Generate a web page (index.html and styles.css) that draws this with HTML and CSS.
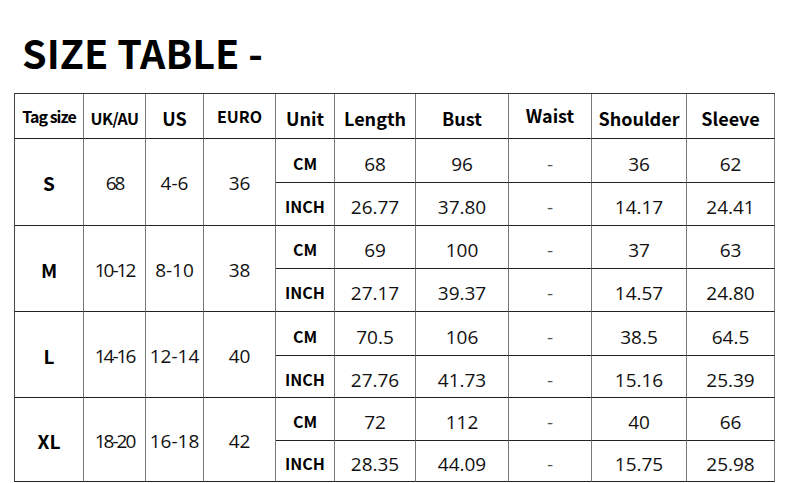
FILE: index.html
```html
<!DOCTYPE html>
<html>
<head>
<meta charset="utf-8">
<link rel="stylesheet" href="styles.css">
</head>
<body>
<h1 class="title">SIZE TABLE -</h1>
<div class="grid">
  <div class="c h tag">Tag size</div>
  <div class="c h ukh">UK/AU</div>
  <div class="c h">US</div>
  <div class="c h euro">EURO</div>
  <div class="c h">Unit</div>
  <div class="c h">Length</div>
  <div class="c h">Bust</div>
  <div class="c h waist">Waist</div>
  <div class="c h">Shoulder</div>
  <div class="c h">Sleeve</div>

  <div class="c sz span2">S</div>
  <div class="c n uk span2">68</div>
  <div class="c n span2">4-6</div>
  <div class="c n span2">36</div>
  <div class="c u">CM</div>
  <div class="c n">68</div>
  <div class="c n">96</div>
  <div class="c n dash">-</div>
  <div class="c n">36</div>
  <div class="c n">62</div>
  <div class="c u">INCH</div>
  <div class="c n">26.77</div>
  <div class="c n">37.80</div>
  <div class="c n dash">-</div>
  <div class="c n">14.17</div>
  <div class="c n">24.41</div>

  <div class="c sz span2">M</div>
  <div class="c n uk span2">10-12</div>
  <div class="c n span2">8-10</div>
  <div class="c n span2">38</div>
  <div class="c u">CM</div>
  <div class="c n">69</div>
  <div class="c n">100</div>
  <div class="c n dash">-</div>
  <div class="c n">37</div>
  <div class="c n">63</div>
  <div class="c u">INCH</div>
  <div class="c n">27.17</div>
  <div class="c n">39.37</div>
  <div class="c n dash">-</div>
  <div class="c n">14.57</div>
  <div class="c n">24.80</div>

  <div class="c sz span2">L</div>
  <div class="c n uk span2">14-16</div>
  <div class="c n span2">12-14</div>
  <div class="c n span2">40</div>
  <div class="c u">CM</div>
  <div class="c n">70.5</div>
  <div class="c n">106</div>
  <div class="c n dash">-</div>
  <div class="c n">38.5</div>
  <div class="c n">64.5</div>
  <div class="c u">INCH</div>
  <div class="c n">27.76</div>
  <div class="c n">41.73</div>
  <div class="c n dash">-</div>
  <div class="c n">15.16</div>
  <div class="c n">25.39</div>

  <div class="c sz span2">XL</div>
  <div class="c n uk span2">18-20</div>
  <div class="c n span2">16-18</div>
  <div class="c n span2">42</div>
  <div class="c u">CM</div>
  <div class="c n">72</div>
  <div class="c n">112</div>
  <div class="c n dash">-</div>
  <div class="c n">40</div>
  <div class="c n">66</div>
  <div class="c u">INCH</div>
  <div class="c n">28.35</div>
  <div class="c n">44.09</div>
  <div class="c n dash">-</div>
  <div class="c n">15.75</div>
  <div class="c n">25.98</div>
</div>
</body>
</html>
```
FILE: styles.css
```css
html, body {
  margin: 0;
  padding: 0;
  background: #fff;
  color: #111;
}
.title {
  margin: 0;
  padding: 28px 0 0 22px;
  height: 93px;
  box-sizing: border-box;
  font-family: "Noto Sans CJK SC", "Noto Sans", sans-serif;
  font-weight: 700;
  font-size: 39.5px;
  line-height: 48px;
  letter-spacing: 0;
  color: #000;
}
.grid {
  margin-left: 14px;
  display: grid;
  width: 761px;
  box-sizing: border-box;
  grid-template-columns: 69px 62px 58px 72px 59px 81px 93px 83px 95px 88px;
  grid-template-rows: 45px 44px 43px 43px 43px 44px 42px 43px 41px;
  border-top: 1px solid #333;
  border-left: 1px solid #444;
}
.c {
  box-sizing: border-box;
  border-right: 1px solid #7a7a7a;
  border-bottom: 1px solid #222;
  display: flex;
  align-items: center;
  justify-content: center;
  white-space: nowrap;
}
.span2 { grid-row: span 2; }
.h, .sz, .u {
  font-family: "Noto Sans CJK SC", "Noto Sans", sans-serif;
  font-weight: 700;
  color: #000;
}
.h { font-size: 18px; padding-top: 4px; }
.h.tag { font-size: 16px; letter-spacing: -1px; padding-top: 0; }
.h.ukh { font-size: 16px; letter-spacing: -0.5px; }
.h.euro { font-size: 16px; padding-top: 0; }
.h.waist { padding-top: 0; padding-bottom: 2px; }
.sz { font-size: 19px; padding-top: 1px; }
.u { font-size: 16px; padding-top: 4px; }
.n {
  font-family: "Open Sans", "Noto Sans", sans-serif;
  font-size: 19px;
  color: #111;
  padding-top: 6px;
}
.n.span2 { padding-top: 2px; }
.n.uk { letter-spacing: -2px; }
.dash { color: #555; }
```
